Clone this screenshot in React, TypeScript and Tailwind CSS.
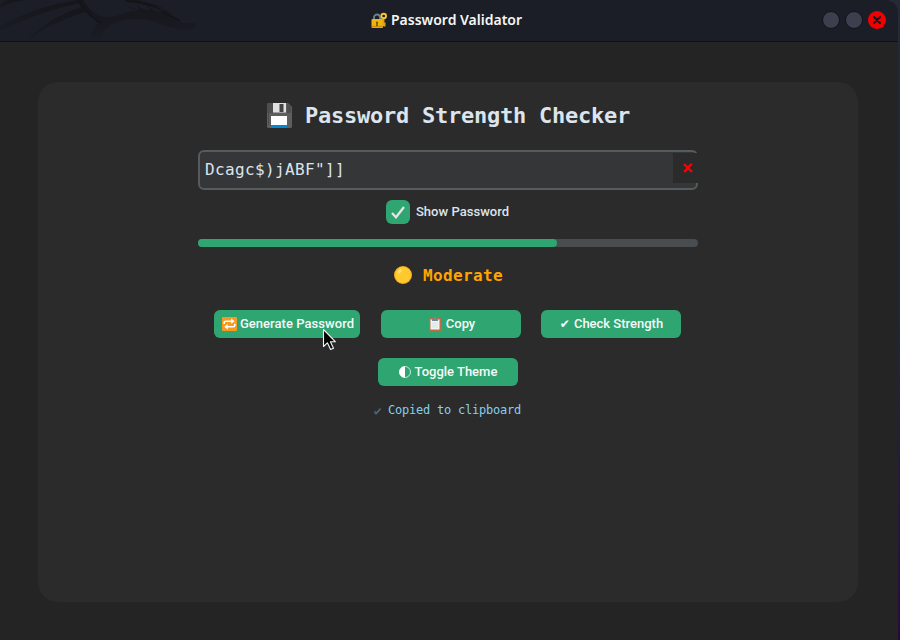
import React from "react";

const MONO = "font-['DejaVu_Sans_Mono','Liberation_Mono',monospace]";
const ROBOTO = "font-['Roboto','Liberation_Sans',sans-serif]";

function Dragon() {
  return (
    <svg className="absolute left-0 top-0" width="220" height="41" viewBox="0 0 220 41" fill="none">
      <defs>
        <linearGradient id="wing" x1="0" y1="0" x2="0" y2="1">
          <stop offset="0" stopColor="#14161b" />
          <stop offset="1" stopColor="#1a1c23" />
        </linearGradient>
      </defs>
      <path d="M0 5Q3 1 8 0H27Q12 1 0 8Z" fill="url(#wing)" />
      <path d="M0 26Q36 6 78 0L80 3Q36 13 0 31Z" fill="url(#wing)" />
      <path d="M28 39Q48 18 82 7L86 12Q50 23 31 39Z" fill="url(#wing)" />
      <path d="M76 0H83Q94 17 107 17C119 17 126 10 139 11Q128 9 125 4Q131 9 140 10Q137 7 137 5Q143 11 151 10Q147 8 147 5Q153 11 160 12L166 10Q151 3 125 0H137Q155 3 165 9Q176 18 183 23L196 23Q196 30 188 30Q174 29 159 24C145 17 132 19 121 21Q104 25 101 39H91Q91 29 98 23Q86 15 76 0Z" fill="url(#wing)" />
      <path d="M78 0Q91 19 102 23M125 1Q149 3 161 10Q169 17 180 20" stroke="#121419" strokeWidth="1.3" />
    </svg>
  );
}

function LockKey() {
  return (
    <svg width="17" height="17" viewBox="0 0 17 17" fill="none">
      <path d="M3 8V5.5a3 3 0 0 1 6 0V8" stroke="#66858f" strokeWidth="1.8" />
      <rect x=".5" y="7" width="11.5" height="9" rx="1" fill="#efb40d" />
      <path d="M1 14.5h10.6" stroke="#d18c05" strokeWidth="1.5" />
      <path d="M6 9.6a1.2 1.2 0 0 1 .6 2.2l.4 2.2H5l.4-2.2A1.2 1.2 0 0 1 6 9.6Z" fill="#704f13" />
      <path d="M12.5 5.5V14M12.5 11.5h2M12.5 13.5h2" stroke="#dca11d" strokeWidth="1.8" />
      <circle cx="12.7" cy="4" r="2.3" stroke="#ffc62b" strokeWidth="1.9" />
    </svg>
  );
}

function Floppy() {
  return (
    <svg width="25" height="25" viewBox="0 0 25 25">
      <path d="M1 0H21L25 4V24L24 25H1L0 24V1Z" fill="#5e5e5e" />
      <path d="M2 0H6V10H20V0L24 4V10H0V1Z" fill="#4e4e4e" />
      <path d="M1.5 3V22" stroke="#4c4c4c" />
      <path d="M6 0H19V9.5H6Z" fill="#e0e0e0" />
      <path d="M12.5 1H16.5V9H12.5Z" fill="#424242" />
      <path d="M4 13H20V22H4Z" fill="#fff" />
      <path d="M4 22H20V25H4Z" fill="#0288d1" />
    </svg>
  );
}

function Repeat() {
  return (
    <svg width="15" height="14" viewBox="0 0 15 14" fill="none">
      <rect width="15" height="14" rx="1" fill="#f79b20" />
      <path d="M2.2 7V5.8Q2.2 4.2 4 4.2H10M12.8 6.8V8Q12.8 9.7 11 9.7H5" stroke="#fff" strokeWidth="1.6" />
      <path d="M9.2 1.5L12.7 4.2L9.2 6.8ZM5.8 7.1L2.3 9.7L5.8 12.4Z" fill="#fff" />
    </svg>
  );
}

function Clipboard() {
  return (
    <svg width="12" height="14" viewBox="0 0 12 14" fill="none">
      <rect y="1" width="12" height="13" rx=".8" fill="#ba7046" />
      <path d="M1.5 2.5H10.5V12.5H1.5Z" fill="#f2f4f5" />
      <path d="M3 6H9M3 8H9M3 10H9" stroke="#cfd8dc" strokeWidth=".7" />
      <path d="M3 2H4.5Q4.5 0 6 0Q7.5 0 7.5 2H9V4H3Z" fill="#718b96" />
    </svg>
  );
}

function HalfCircle() {
  return (
    <svg className="mb-px" width="12" height="12" viewBox="0 0 12 12" fill="none">
      <circle cx="6" cy="6" r="5.5" stroke="#eef8f4" strokeWidth=".8" />
      <path d="M6 .2A5.8 5.8 0 0 0 6 11.8Z" fill="#fff" />
    </svg>
  );
}

function Button({ icon, label, className }: { icon: React.ReactNode; label: string; className: string }) {
  return (
    <button className={`flex h-7 items-center justify-center rounded-[6px] bg-[#2fa572] text-[13px] font-medium leading-7 text-[#f5faf8] ${ROBOTO} ${className}`}>
      {icon}
      <span className="whitespace-pre">{label}</span>
    </button>
  );
}

export default function App() {
  return (
    <div className="relative h-[640px] w-[900px] overflow-hidden bg-gradient-to-b from-[#252938] via-[#202735] to-[#29083d]">
      <div className="flex h-[640px] w-[898px] flex-col overflow-hidden rounded-tr-[13px] bg-[#242424]">
        <header className="relative flex h-[42px] shrink-0 items-center border-b border-[#101116] bg-[#1b1e26]">
          <Dragon />
          <div className="ml-[371px] flex items-center gap-[3px] pb-px">
            <LockKey />
            <h1 className="whitespace-nowrap font-['Noto_Sans','Open_Sans',sans-serif] text-[14px] font-semibold leading-5 text-[#f5f5f5]">Password Validator</h1>
          </div>
          <div className="ml-auto mr-3 flex items-center gap-[5px] pb-px">
            <span className="size-[18px] rounded-full border border-[#11131a] bg-[#3c3f4e]" />
            <span className="size-[18px] rounded-full border border-[#11131a] bg-[#3c3f4e]" />
            <span className="flex size-[18px] items-center justify-center rounded-full bg-[#f00000]">
              <svg width="8" height="8" viewBox="0 0 8 8"><path d="M1 1L7 7M7 1L1 7" stroke="#17171c" strokeWidth="2.2" strokeLinecap="round" /></svg>
            </span>
          </div>
        </header>

        <main className="ml-[38px] mt-10 flex h-[520px] w-[820px] flex-col items-center rounded-[20px] bg-[#2b2b2b]">
          <div className="mt-5 flex h-[26px] items-center gap-[13px] pl-px">
            <Floppy />
            <h2 className={`whitespace-nowrap pt-0.5 text-[22px] font-bold leading-[26px] tracking-[-0.245px] text-[#dce4ee] ${MONO}`}>Password Strength Checker</h2>
          </div>

          <div className="relative mt-[22px] flex h-10 w-[500px] items-center rounded-[6px] border-2 border-[#565b5e] bg-[#343638] pl-[5px]">
            <span className={`text-[16px] leading-5 tracking-[0.367px] text-[#dce4ee] ${MONO}`}>{'Dcagc$)jABF"]]'}</span>
            <button className="absolute -right-0.5 top-px flex h-[30px] w-[25px] items-center justify-center bg-[#2b2b2b] pb-px pl-1">
              <svg width="10" height="10" viewBox="0 0 10 10"><path d="M1 1L9 9M8.8 .8L1.2 9" stroke="#ff0000" strokeWidth="2.3" /></svg>
            </button>
          </div>

          <label className="mt-[10px] flex h-6 items-center gap-[6px] pr-px">
            <span className="flex size-6 items-center justify-center rounded-[6px] bg-[#2fa572]">
              <svg width="14" height="13" viewBox="0 0 14 13" fill="none"><path d="M1 7L5 11.3L13 1" stroke="#e2e6e4" strokeWidth="2.3" /></svg>
            </span>
            <span className={`text-[13px] font-medium leading-6 tracking-[0.03px] text-[#dce4ee] ${ROBOTO}`}>Show Password</span>
          </label>

          <div className="mt-[15px] h-2 w-[500px] rounded-full bg-[#4a4d50]">
            <div className="h-2 w-[359px] rounded-full bg-[#2fa572]" />
          </div>

          <div className="mt-[18px] flex h-5 items-center gap-[11px] pl-px">
            <svg width="18" height="18" viewBox="0 0 18 18">
              <circle cx="9" cy="9" r="9" fill="#f5ae21" />
              <circle cx="9" cy="9" r="7.9" fill="#ffca2d" />
              <ellipse cx="5.8" cy="5.2" rx="2.5" ry="1.5" fill="#ffe36a" transform="rotate(-40 5.8 5.2)" />
            </svg>
            <span className={`pt-0.5 text-[16px] font-bold leading-5 tracking-[0.367px] text-[#ffa500] ${MONO}`}>Moderate</span>
          </div>

          <div className="mt-[25px] flex items-start pr-px">
            <Button className="mr-[21px] w-[146px] gap-[3px] pl-0.5 tracking-[0.05px]" icon={<Repeat />} label="Generate Password" />
            <Button className="mr-5 w-[140px] gap-[5px] pl-0.5" icon={<Clipboard />} label="Copy" />
            <Button className="w-[140px] gap-[4px] pl-px" icon={<span className="font-['DejaVu_Sans',sans-serif] text-[12px]">✔</span>} label="Check Strength" />
          </div>
          <Button className="mt-5 w-[140px] gap-[4px]" icon={<HalfCircle />} label="Toggle Theme" />

          <div className="mt-4 flex h-4 items-center gap-[7px] pr-px">
            <svg className="mt-0.5" width="7" height="7" viewBox="0 0 7 7" fill="none"><path d="M.4 4.2L2 6.4L6.7 1.2L6 .5L2.2 4.8L1.4 3.4Z" stroke="#6793a3" strokeWidth=".7" /></svg>
            <span className={`whitespace-nowrap text-[12px] leading-4 tracking-[-0.225px] text-[#87ceeb] ${MONO}`}>Copied to clipboard</span>
          </div>
        </main>
      </div>

      <svg className="absolute left-[322px] top-[328px]" width="16" height="24" viewBox="0 0 16 24">
        <path d="M1.5 1.5V18.5L5.4 14.8L8.6 21.5L11.5 20.2L8.4 13.7H13.3Z" fill="#050505" stroke="#f5f5f5" strokeWidth="1.1" strokeLinejoin="round" />
      </svg>
    </div>
  );
}
